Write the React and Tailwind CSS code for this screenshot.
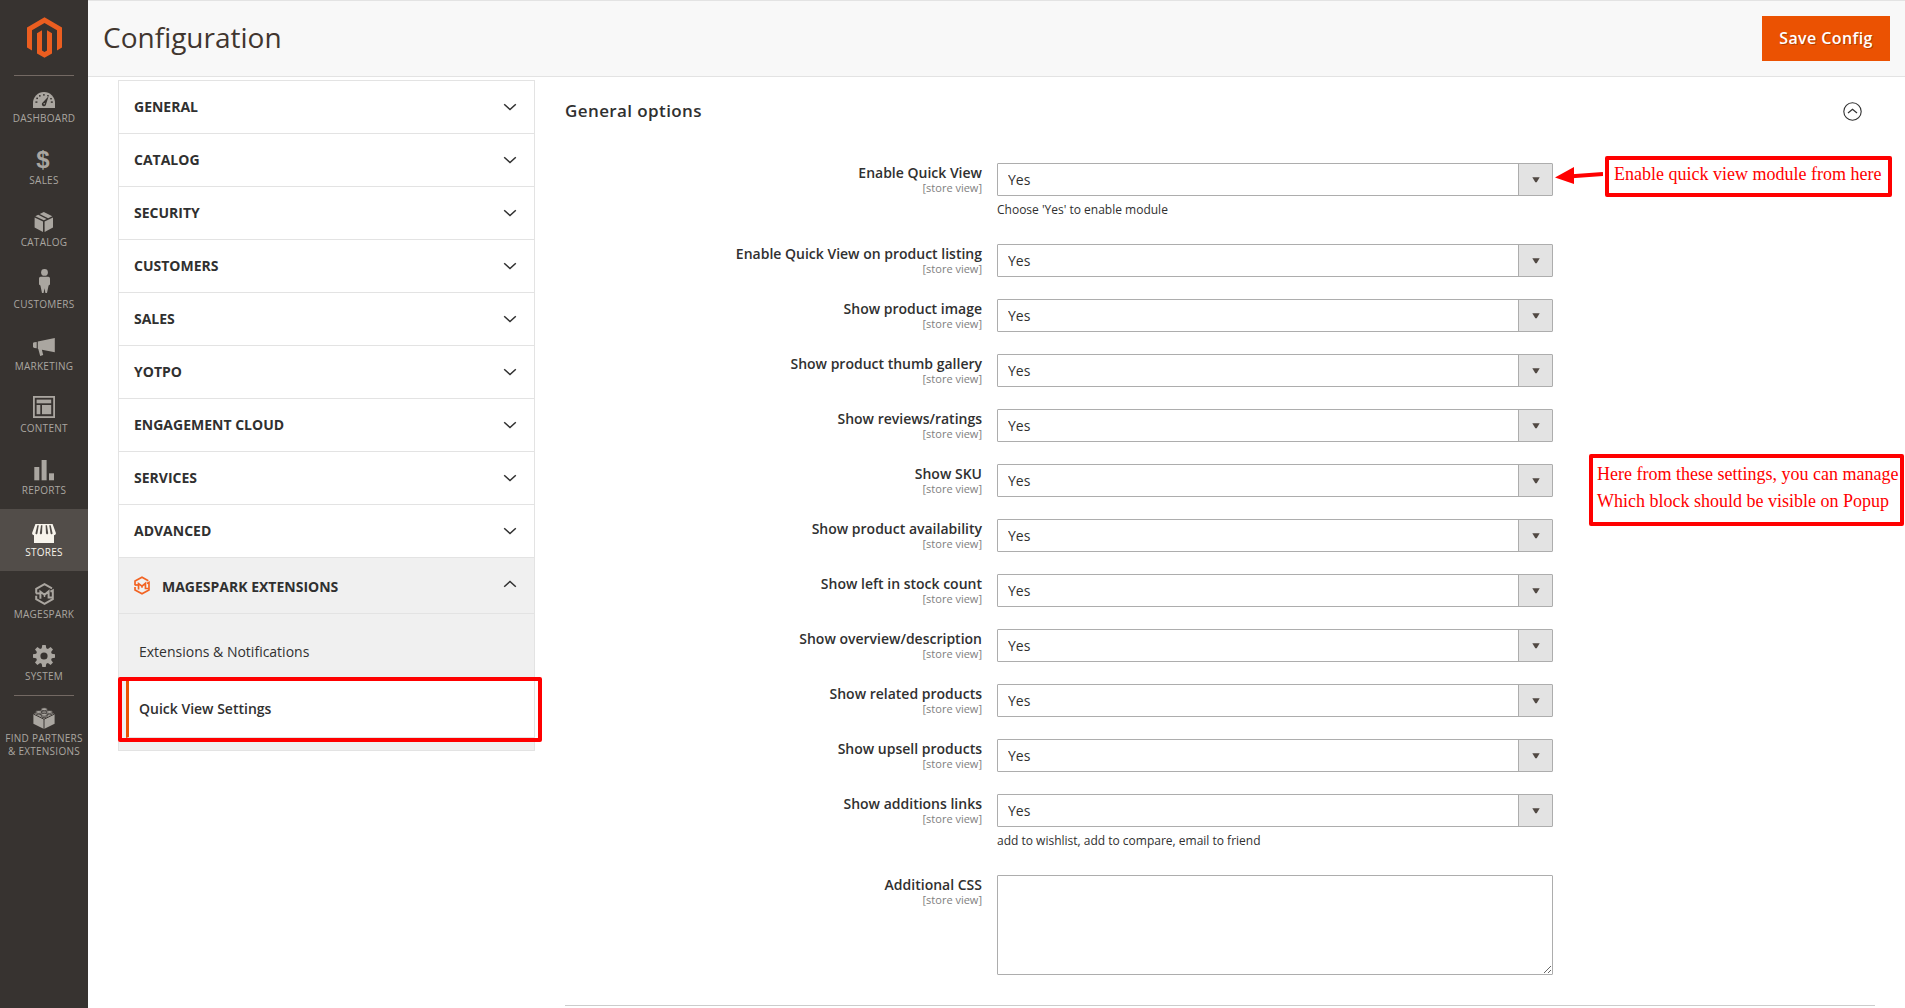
import { useState } from 'react'
import { clsx } from 'clsx'

const YES_NO = ['Yes', 'No']

const ICONS = {
  dashboard: (
    <>
      <path d="M1 25V20A11 11 0 0 1 23 20V25Z" fill="currentColor" />
      <g fill="#373330">
        <rect x="3.4" y="18.4" width="2" height="1.4" />
        <rect x="4.3" y="14.6" width="1.7" height="1.5" />
        <rect x="7" y="12.1" width="1.6" height="1.5" />
        <rect x="11.2" y="11" width="1.4" height="1.7" />
        <rect x="15.2" y="12" width="1.5" height="1.4" />
        <rect x="18.2" y="15" width="1.6" height="1.4" />
        <rect x="18.8" y="18.4" width="2" height="1.4" />
        <path d="M16.6 13.2 14 21.4a2.1 2.1 0 1 1-3.3-2Z" />
      </g>
      <circle cx="12.2" cy="20.7" r=".7" fill="currentColor" />
    </>
  ),
  catalog: (
    <g fill="currentColor">
      <path d="M2.6 10.4 11 14.6V25L2.6 20.6Z" />
      <path d="M12.6 14.6 21 10.4V20.6L12.6 25Z" />
      <path d="M3.3 9.2 6.2 7.7 14.6 11.9 11.8 13.3Z" />
      <path d="M7.7 7 11.8 5 20.3 9.2 16.1 11.2Z" />
    </g>
  ),
  customers: (
    <g fill="currentColor">
      <circle cx="12.5" cy="3.4" r="3.4" />
      <path d="M8.6 7.7H16.4Q18 7.9 18 9.6V15.4L16.6 16.6 15 24H13.4L12.5 19.2 11.6 24H10L8.4 16.6 7 15.4V9.6Q7 7.9 8.6 7.7Z" />
    </g>
  ),
  marketing: (
    <g fill="currentColor">
      <path d="M5.8 10.6 22.8 6.9V21.3L11.3 18.9 9.9 18.7 11.2 24 8.2 25 6.3 18 5.8 17.8Z" />
      <path d="M1 12.2Q1.2 11.4 2.4 11.3L4.7 11V17.2L2.4 16.9Q1.2 16.8 1 16Z" />
    </g>
  ),
  content: (
    <>
      <rect x="1.9" y="3.9" width="20.2" height="20.2" fill="none" stroke="currentColor" strokeWidth="1.8" />
      <g fill="currentColor">
        <rect x="4.6" y="6.6" width="14.6" height="3.7" />
        <rect x="4.6" y="12" width="3.7" height="9.2" />
        <rect x="10" y="12" width="9.2" height="9.2" />
      </g>
    </>
  ),
  reports: (
    <g fill="currentColor">
      <rect x="2.3" y="12" width="5" height="13.3" />
      <rect x="9.6" y="5" width="5" height="20.3" />
      <rect x="17" y="18.3" width="5" height="7" />
    </g>
  ),
  stores: (
    <>
      <path d="M3.4 7H20.6L24 16.2Q23.6 18 22 18.2V26H2V18.2Q.4 18 0 16.2Z" fill="currentColor" />
      <g fill="#524d49">
        <path d="M5.3 8.2H6.8L5.4 16.4Q4.4 18.2 3.4 16.6Z" />
        <path d="M9 8.2H10.4L10 16.6Q8.9 18.2 7.8 16.6Z" />
        <path d="M13.6 8.2H15L16.2 16.6Q15.1 18.2 14 16.6Z" />
        <path d="M17.2 8.2H18.7L20.6 16.6Q19.6 18.2 18.6 16.4Z" />
      </g>
    </>
  ),
  system: (
    <path
      fill="currentColor"
      fillRule="evenodd"
      d="M10.3 4h3.4l.6 3.2 1.6.7 2.7-1.9 2.4 2.4-1.9 2.7.7 1.6 3.2.6v3.4l-3.2.6-.7 1.6 1.9 2.7-2.4 2.4-2.7-1.9-1.6.7-.6 3.2h-3.4l-.6-3.2-1.6-.7L5.4 24 3 21.6l1.9-2.7-.7-1.6L1 16.7v-3.4l3.2-.6.7-1.6L3 8.4 5.4 6l2.7 1.9 1.6-.7ZM12 11.4a3.6 3.6 0 1 0 0 7.2 3.6 3.6 0 0 0 0-7.2Z"
    />
  ),
  partners: (
    <>
      <path d="M1 10.5 12 4.5 23 10.5V20.5L12 26 1 20.5Z" fill="currentColor" />
      <path d="M1 10.4 12 15.8 23 10.4M12 15.8V26" fill="none" stroke="#373330" strokeWidth="1" />
      <g fill="currentColor" stroke="#373330" strokeWidth=".8">
        <path d="M9 5.4v1.4a3.2 1.5 0 0 0 6.4 0V5.4" />
        <ellipse cx="12.2" cy="5.4" rx="3.2" ry="1.5" />
        <path d="M3.4 8.3v1.4a3.2 1.5 0 0 0 6.4 0V8.3" />
        <ellipse cx="6.6" cy="8.3" rx="3.2" ry="1.5" />
        <path d="M14.4 8.3v1.4a3.2 1.5 0 0 0 6.4 0V8.3" />
        <ellipse cx="17.6" cy="8.3" rx="3.2" ry="1.5" />
        <path d="M9 11.2v1.4a3.2 1.5 0 0 0 6.4 0V11.2" />
        <ellipse cx="12.2" cy="11.2" rx="3.2" ry="1.5" />
      </g>
    </>
  ),
}

const MENU = [
  { id: 'dashboard', label: 'Dashboard' },
  { id: 'sales', label: 'Sales' },
  { id: 'catalog', label: 'Catalog' },
  { id: 'customers', label: 'Customers' },
  { id: 'marketing', label: 'Marketing' },
  { id: 'content', label: 'Content' },
  { id: 'reports', label: 'Reports' },
  { id: 'stores', label: 'Stores', active: true },
  { id: 'magespark', label: 'Magespark' },
  { id: 'system', label: 'System' },
]

const TABS = [
  'General',
  'Catalog',
  'Security',
  'Customers',
  'Sales',
  'Yotpo',
  'Engagement Cloud',
  'Services',
  'Advanced',
]

const FIELDS = [
  { label: 'Enable Quick View', note: "Choose 'Yes' to enable module" },
  { label: 'Enable Quick View on product listing' },
  { label: 'Show product image' },
  { label: 'Show product thumb gallery' },
  { label: 'Show reviews/ratings' },
  { label: 'Show SKU' },
  { label: 'Show product availability' },
  { label: 'Show left in stock count' },
  { label: 'Show overview/description' },
  { label: 'Show related products' },
  { label: 'Show upsell products' },
  { label: 'Show additions links', note: 'add to wishlist, add to compare, email to friend' },
]

function MagentoLogo() {
  return (
    <svg viewBox="1.609 0 20.782 24" className="w-[35px] h-[41px]" fill="#eb5e20">
      <path d="M12 24l-4.455-2.572v-12l2.97-1.715v12.001l1.485.902 1.485-.902V7.713l2.971 1.715v12L12 24zM22.391 6v12l-2.969 1.714V7.713L12 3.43 4.574 7.713v12.001L1.609 18V6L12 0l10.391 6z" />
    </svg>
  )
}

function MagesparkLogo({ className }) {
  return (
    <svg viewBox="0 0 19 22" className={className} fill="none" stroke="currentColor" strokeWidth="2">
      <path d="M1.2 10.6V5.8L9.5 1.2 17 5.3" />
      <path d="M1.2 12.8V16.2L9.5 20.8 17.8 16.2V7.4L15.4 8.6" />
      <path d="M1 10.4H5.4" />
      <path d="M5.4 15.8V8.8L9.5 11.8 13.6 8.4V14.6H17.5" />
      <path d="M9.5 11.4V14" strokeWidth="1.4" />
    </svg>
  )
}

function MenuIcon({ id }) {
  if (id === 'sales') {
    return (
      <span className="h-7 pt-[1px] font-['Liberation_Sans',sans-serif] font-bold text-[24px] leading-[28px] -translate-x-[1px]">
        $
      </span>
    )
  }
  if (id === 'magespark') {
    return (
      <span className="h-7 pt-1">
        <MagesparkLogo className="w-[19px] h-[22px]" />
      </span>
    )
  }
  return (
    <svg viewBox="0 0 24 28" className="w-6 h-7">
      {ICONS[id]}
    </svg>
  )
}

function MenuItem({ id, label, active }) {
  return (
    <a
      className={clsx(
        'flex flex-col items-center h-[62px] pt-2 cursor-pointer',
        active ? 'bg-[#524d49] text-[#f7f3eb]' : 'text-[#aaa6a0]'
      )}
    >
      <MenuIcon id={id} />
      <span className="text-[10px] leading-[13px] tracking-[0.25px] uppercase text-center whitespace-pre-line mt-px">
        {label}
      </span>
    </a>
  )
}

function Sidebar() {
  return (
    <aside className="w-[88px] shrink-0 bg-[#373330]">
      <div className="h-[75px] pt-[17px] pl-[27px]">
        <MagentoLogo />
      </div>
      <nav className="relative">
        <div className="absolute top-0 left-[14px] w-[60px] h-px bg-[#736963]" />
        {MENU.map(item => (
          <MenuItem key={item.id} {...item} />
        ))}
        <div className="relative pt-px">
          <div className="absolute top-0 left-[14px] w-[60px] h-px bg-[#736963]" />
          <MenuItem id="partners" label={'Find Partners\n& Extensions'} />
        </div>
      </nav>
    </aside>
  )
}

function Chevron({ up }) {
  return (
    <svg viewBox="0 0 14 8" className="w-[14px] h-2" fill="none" stroke="#303030" strokeWidth="1.5">
      <path d={up ? 'M1.2 6.8 7 1.4 12.8 6.8' : 'M1.2 1.2 7 6.6 12.8 1.2'} />
    </svg>
  )
}

function ConfigTabs() {
  return (
    <div className="w-[417px] mt-[3px] shrink-0 self-start border border-[#e3e3e3] text-[14px] text-[#303030]">
      {TABS.map(tab => (
        <div key={tab} className="flex items-center justify-between h-[53px] pl-[15px] pr-[17px] pb-px border-b border-[#e3e3e3]">
          <span className="font-bold uppercase">{tab}</span>
          <Chevron />
        </div>
      ))}

      <div className="bg-[#f0f0f0]">
        <div className="flex items-center h-14 pl-[15px] pr-[17px] border-b border-[#e3e3e3]">
          <MagesparkLogo className="w-4 h-[19px] text-[#f26322]" />
          <span className="flex-1 pl-3 pt-px font-bold uppercase">Magespark Extensions</span>
          <span className="mb-1 flex">
            <Chevron up />
          </span>
        </div>
        <div className="flex items-center h-[67px] pt-2 pl-5">Extensions &amp; Notifications</div>
        <div className="relative ml-[7px] h-[57px] flex items-center pb-[2px] pl-[10px] bg-white border-l-[3px] border-b border-l-[#eb5202] border-b-[#e3e3e3] font-semibold">
          Quick View Settings
          {/* highlight around the active page */}
          <div className="absolute -left-[11px] -top-[4px] w-[424px] h-[65px] rounded-[2px] border-4 border-[#ff0000]" />
        </div>
        <div className="h-3" />
      </div>
    </div>
  )
}

function FieldLabel({ children }) {
  return (
    <div className="w-[417px] shrink-0 mr-[15px] text-right">
      <div className="text-[14px] leading-[19px] font-semibold text-[#303030]">{children}</div>
      <div className="text-[11px] leading-[13px] -mt-[1px] text-[#808080]">[store view]</div>
    </div>
  )
}

function SelectField({ label, note }) {
  const [value, setValue] = useState('Yes')

  return (
    <div className={clsx('flex', note ? 'h-[81px]' : 'h-[55px]')}>
      <FieldLabel>{label}</FieldLabel>
      <div className="w-[556px]">
        <div className="relative h-[33px]">
          <select
            value={value}
            onChange={e => setValue(e.target.value)}
            className="appearance-none w-full h-full pl-[10px] rounded-[1px] border border-[#adadad] bg-white text-[14px] text-[#303030]"
          >
            {YES_NO.map(option => (
              <option key={option}>{option}</option>
            ))}
          </select>
          <div className="absolute right-px top-px w-[34px] h-[31px] flex items-center justify-center bg-[#e3e3e3] border-l border-[#adadad] pointer-events-none">
            <svg viewBox="0 0 8 6" className="w-2 h-[6px] mt-px" fill="#514943">
              <path d="M.3.3H7.7L4.7 5.3H3.3Z" />
            </svg>
          </div>
        </div>
        {note && <p className="mt-[6px] text-[12px] leading-4 text-[#303030]">{note}</p>}
      </div>
    </div>
  )
}

export default function App() {
  return (
    <div className="flex w-full h-[1008px] overflow-hidden bg-white font-['Open_Sans',sans-serif]">
      <Sidebar />

      <div className="flex-1 flex flex-col">
        <header className="flex items-center justify-between h-[77px] pl-[15px] pr-[15px] bg-[#f8f8f8] border-y border-[#e3e3e3]">
          <h1 className="pb-1 text-[28px] leading-[38px] text-[#41362f]">Configuration</h1>
          <button className="w-[128px] h-[45px] pb-[2px] bg-[#eb5202] text-white text-[16px] font-semibold tracking-[0.4px] [text-shadow:1px_1px_0_rgba(0,0,0,0.25)]">
            Save Config
          </button>
        </header>

        <div className="flex flex-1 pl-[30px]">
          <ConfigTabs />

          <main className="relative w-[1310px] ml-[30px]">
            <div className="flex items-center justify-between h-[86px] pb-[18px] pr-[13px]">
              <h2 className="text-[17px] leading-6 font-semibold tracking-[0.4px] text-[#303030]">General options</h2>
              <svg viewBox="0 0 19 19" className="w-[19px] h-[19px] mt-px" fill="none" stroke="#303030">
                <circle cx="9.5" cy="9.5" r="8.7" strokeWidth="1.1" />
                <path d="M5 11 9.5 7.3 14 11" strokeWidth="1.2" />
              </svg>
            </div>

            {FIELDS.map(field => (
              <SelectField key={field.label} {...field} />
            ))}

            <div className="flex h-[130px]">
              <FieldLabel>Additional CSS</FieldLabel>
              <textarea className="w-[556px] h-[100px] border border-[#adadad] rounded-[1px] bg-white" />
            </div>
            <div className="h-px bg-[#cccccc]" />

            {/* annotations floating over the form */}
            <svg viewBox="0 0 49 18" className="absolute left-[989px] top-[89px] w-[49px] h-[18px]">
              <path d="M18 10.3 49 8" stroke="#ff0000" strokeWidth="4" />
              <path d="M1 11.5 20 1V18Z" fill="#ff0000" />
            </svg>
            <div className="absolute left-[1040px] top-[79px] w-[287px] h-[41px] pl-[5px] rounded-[2px] border-4 border-[#ff0000] font-['Liberation_Serif',serif] text-[18px] leading-[29px] whitespace-nowrap text-[#ff0000]">
              Enable quick view module from here
            </div>
            <div className="absolute left-[1024px] top-[377px] w-[315px] h-[72px] pl-1 pt-[3px] rounded-[2px] border-4 border-[#ff0000] font-['Liberation_Serif',serif] text-[18px] leading-[27px] whitespace-nowrap text-[#ff0000]">
              Here from these settings, you can manage
              <br />
              Which block should be visible on Popup
            </div>
          </main>
        </div>
      </div>
    </div>
  )
}
